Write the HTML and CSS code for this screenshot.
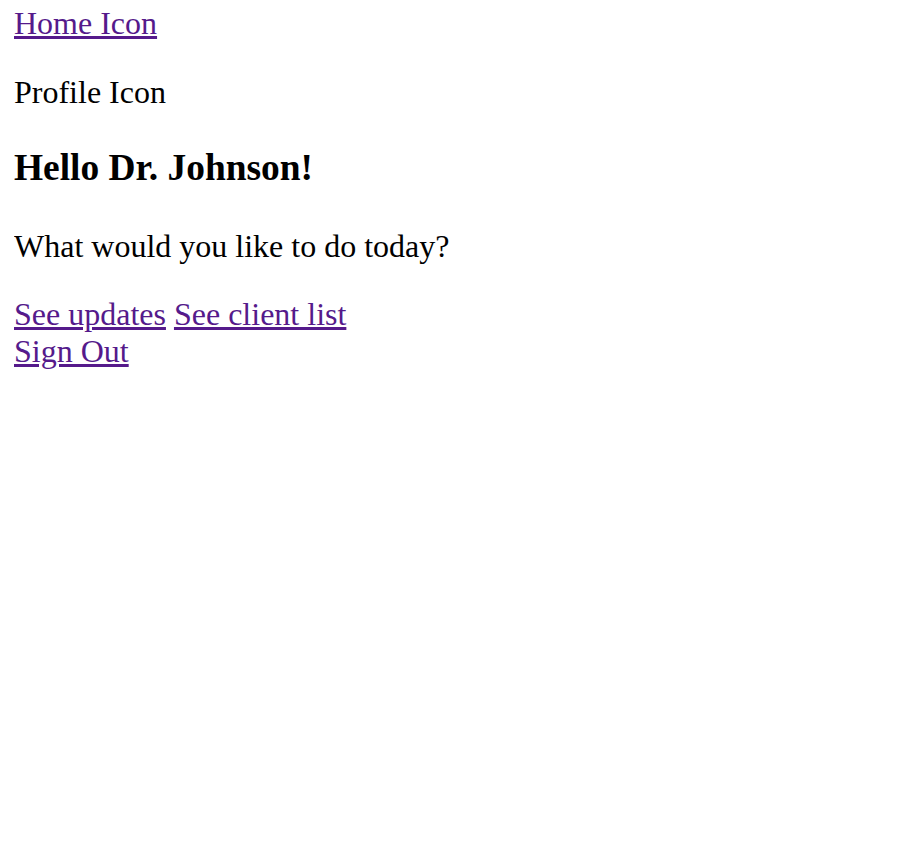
FILE: index.html
```html
<!DOCTYPE html>
<html lang="en">
<head>
<meta charset="utf-8">
<title>Home</title>
<link rel="stylesheet" href="styles.css">
</head>
<body class="page">
  <nav class="topnav">
    <a class="link" href="#">Home Icon</a>
    <p class="profile">Profile Icon</p>
  </nav>
  <main class="content">
    <h3 class="greeting">Hello Dr. Johnson!</h3>
    <p class="prompt">What would you like to do today?</p>
    <div class="actions">
      <a class="link" href="#">See updates</a>
      <a class="link" href="#">See client list</a>
    </div>
    <div class="signout">
      <a class="link" href="#">Sign Out</a>
    </div>
  </main>
</body>
</html>
```
FILE: styles.css
```css
html, body {
  background: #ffffff;
}
.page {
  margin: 5px 14px;
  font-family: "Liberation Serif", "Times New Roman", serif;
  font-size: 32px;
  line-height: 1.15;
  color: #000000;
}
.link {
  color: #551a8b;
  text-decoration: underline;
}
.profile {
  margin: 32px 0;
}
.greeting {
  font-size: 37.44px;
  font-weight: bold;
  margin: 35.5px 0 38.5px;
}
.prompt {
  margin: 32px 0;
}
.actions, .signout {
  margin: 0;
}
```
